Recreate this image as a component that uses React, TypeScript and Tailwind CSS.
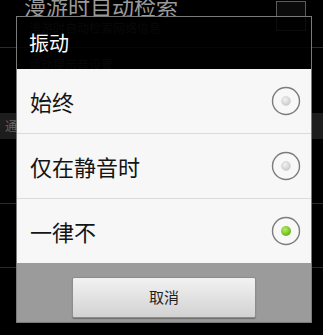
const cjk = { fontFamily: '"Noto Sans CJK SC", "Noto Sans", sans-serif' }

const options = [
  { label: '始终', checked: false },
  { label: '仅在静音时', checked: false },
  { label: '一律不', checked: true },
]

function Radio({ checked }: { checked: boolean }) {
  return (
    <svg width="30" height="30" viewBox="0 0 30 30">
      <defs>
        <radialGradient id="g" cx="40%" cy="35%" r="70%">
          <stop offset="0%" stopColor="#b6f060" />
          <stop offset="100%" stopColor="#5fae16" />
        </radialGradient>
        <radialGradient id="w" cx="40%" cy="35%" r="70%">
          <stop offset="0%" stopColor="#f2f2f2" />
          <stop offset="100%" stopColor="#c8c8c8" />
        </radialGradient>
      </defs>
      <circle cx="15" cy="15" r="13.5" fill="#f8f8f8" stroke="#7c7c7c" strokeWidth="1.4" />
      {checked ? (
        <circle cx="15" cy="15" r="5" fill="url(#g)" />
      ) : (
        <circle cx="15" cy="15" r="4.5" fill="url(#w)" stroke="#d0d0d0" strokeWidth="0.6" />
      )}
    </svg>
  )
}

export default function App() {
  return (
    <div className="relative h-[335px] w-[323px] overflow-hidden bg-black" style={cjk}>
      {/* Settings list behind the dialog */}
      <div className="flex flex-col">
        <div className="relative h-[47px]">
          <div className="absolute left-[24px] top-[-10px] text-[22px] leading-[30px] text-[#9a9a9a]">
            漫游时自动检索
          </div>
          <div className="absolute left-[29px] top-[21px] text-[12px] leading-[14px] text-[#3a3a3a]">
            漫游时自动检索网络信息
          </div>
          <div className="absolute left-[276px] top-[1px] h-[30px] w-[30px] border border-[#5c5c5c] bg-[#0b0b0b]" />
        </div>
        <div className="h-px bg-[#2c2c2c]" />
        <div className="relative h-[65px]">
          <div className="absolute left-[29px] top-[10px] text-[12px] leading-[14px] text-[#3a3a3a]">
            震动提示音设置
          </div>
        </div>
        <div className="flex h-[26px] items-center bg-[#1d1d1d] pl-[5px] text-[12px] text-[#666]">
          通话设置
        </div>
        <div className="h-[64px]" />
        <div className="h-px bg-[#2c2c2c]" />
        <div className="h-[63px]" />
        <div className="h-px bg-[#2c2c2c]" />
      </div>

      {/* Dialog */}
      <div className="absolute left-[16px] top-[16px] flex w-[296px] flex-col border border-[#7a7a7a]">
        <div className="flex h-[52px] items-center bg-black/85 pl-[12px] text-[20px] text-white">
          振动
        </div>
        <div className="flex flex-col bg-[#f7f7f7]">
          {options.map((o, i) => (
            <div key={o.label}>
              {i > 0 && <div className="h-px bg-[#dadada]" />}
              <div className="flex h-[64px] items-center justify-between pl-[13px] pr-[10px]">
                <span className="text-[22px] text-[#141414]">{o.label}</span>
                <Radio checked={o.checked} />
              </div>
            </div>
          ))}
        </div>
        <div className="flex h-[59px] justify-center bg-[#9b9b9b] pt-[14px]">
          <button
            type="button"
            className="h-[41px] w-[184px] rounded-[2px] border border-[#8c8c8c] bg-gradient-to-b from-[#f2f2f2] to-[#d2d2d2] text-[15px] text-[#1e1e1e] shadow-[0_1px_1px_rgba(0,0,0,0.3)]"
          >
            取消
          </button>
        </div>
      </div>
    </div>
  )
}
